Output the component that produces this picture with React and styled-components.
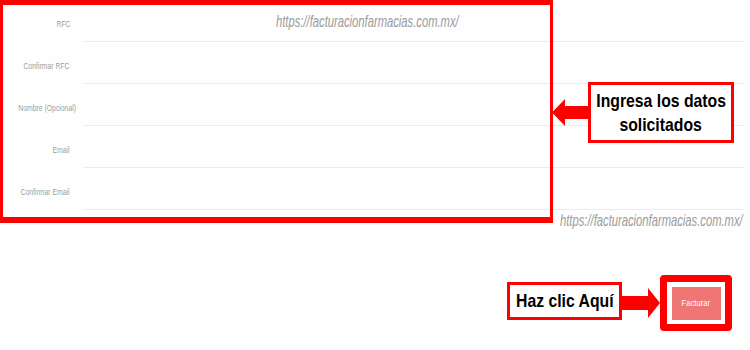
import styled, { createGlobalStyle } from "styled-components";

const GlobalStyle = createGlobalStyle`
    html, body {
        margin: 0;
        padding: 0;
        background: #fdfefd;
    }
    body {
        font-family: "Liberation Sans", Arial, sans-serif;
    }
`;

// no narrow font installed: squeeze Liberation Sans to look like Arial Narrow
const Squeeze = styled.span`
    display: inline-block;
    white-space: nowrap;
    transform: scaleX(${p => p.$k || 0.82});
    transform-origin: ${p => p.$origin || "center"};
`;

const Page = styled.div`
    position: relative;
    width: 750px;
    height: 350px;
    overflow: hidden;
    background: #fdfefd;
`;

const Form = styled.div`
    display: flex;
    flex-direction: column;
`;

const Row = styled.div`
    display: flex;
    gap: 13px;
    height: 42px;
`;

const Label = styled.label`
    width: 70px;
    padding-top: 19px;
    text-align: right;
    font-size: 9px;
    line-height: 10px;
    color: #9e9e9e;
    white-space: nowrap;
    flex-shrink: 0;
`;

const Input = styled.div`
    flex: 1;
    margin-right: 5px;
    border-bottom: 1px solid #ececec;
`;

const Watermark = styled.span`
    position: absolute;
    left: ${p => p.x}px;
    top: ${p => p.y}px;
    font-style: italic;
    font-size: 17px;
    line-height: 20px;
    color: #9c9c9c;
    white-space: nowrap;
`;

const Highlight = styled.div`
    position: absolute;
    left: 0;
    top: 0;
    width: 553px;
    height: 223px;
    box-sizing: border-box;
    border: solid #ff0000;
    border-width: 5px 3px 6px 3px;
    pointer-events: none;
`;

const Callout = styled.div`
    display: flex;
    align-items: center;
    ${p => p.$floating && `
        position: absolute;
        left: 552px;
        top: 82px;
    `}
`;

const Note = styled.div`
    box-sizing: border-box;
    width: ${p => p.$w}px;
    height: ${p => p.$h}px;
    margin-bottom: ${p => p.$lift || 0}px;
    display: flex;
    flex-direction: column;
    align-items: center;
    justify-content: center;
    border: 3px solid #ff0000;
    background: #fff;
    font-weight: bold;
    font-size: 19px;
    line-height: 24px;
    color: #000;
`;

const Actions = styled.div`
    display: flex;
    justify-content: flex-end;
    padding: 65px 18px 0 0;
`;

const Frame = styled.div`
    box-sizing: border-box;
    width: 72px;
    height: 56px;
    border: 7px solid #ff0000;
    border-radius: 4px;
    display: flex;
    align-items: center;
    justify-content: center;
    background: #fff;
`;

const SubmitButton = styled.button`
    width: 49px;
    height: 33px;
    border: none;
    background: #f07575;
    color: #fff;
    font-family: "Liberation Sans", Arial, sans-serif;
    font-size: 9px;
    padding: 0;
`;

function ArrowLeft() {
    return (
        <svg width="36" height="31" viewBox="0 0 36 31">
            <polygon points="0,15.5 13,2 13,9 36,9 36,22 13,22 13,29" fill="#ff0000" />
        </svg>
    );
}

function ArrowRight() {
    return (
        <svg width="38" height="32" viewBox="0 0 38 32">
            <polygon points="0,9 26,9 26,1 38,16 26,31 26,23 0,23" fill="#ff0000" />
        </svg>
    );
}

const fields = ["RFC", "Confirmar RFC", "Nombre (Opcional)", "Email", "Confirmar Email"];
const site = "https://facturacionfarmacias.com.mx/";

export default function App() {
    return (
        <Page>
            <GlobalStyle />
            <Form>
                {fields.map(f => (
                    <Row key={f}>
                        <Label><Squeeze $k={0.76} $origin="right">{f}</Squeeze></Label>
                        <Input />
                    </Row>
                ))}
            </Form>
            <Actions>
                <Callout>
                    <Note $w={115} $h={38} $lift={4}><Squeeze $k={0.83}>Haz clic Aquí</Squeeze></Note>
                    <ArrowRight />
                    <Frame>
                        <SubmitButton><Squeeze $k={0.85}>Facturar</Squeeze></SubmitButton>
                    </Frame>
                </Callout>
            </Actions>

            <Watermark x={276} y={12}><Squeeze $k={0.66} $origin="left">{site}</Squeeze></Watermark>
            <Watermark x={560} y={211}><Squeeze $k={0.66} $origin="left">{site}</Squeeze></Watermark>
            <Highlight />
            <Callout $floating>
                <ArrowLeft />
                <Note $w={146} $h={61}>
                    <Squeeze $k={0.83}>Ingresa los datos</Squeeze>
                    <Squeeze $k={0.83}>solicitados</Squeeze>
                </Note>
            </Callout>
        </Page>
    );
}
